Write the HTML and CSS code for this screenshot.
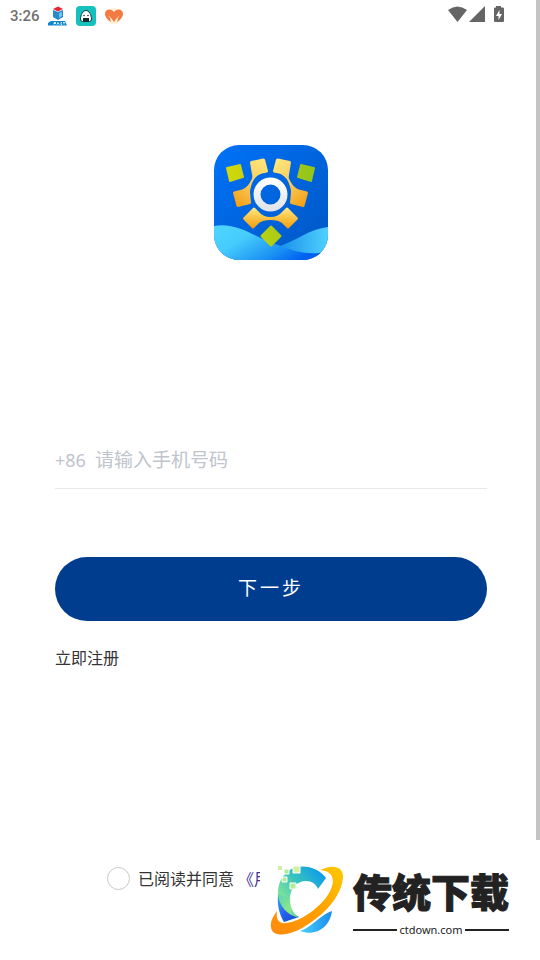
FILE: index.html
```html
<!DOCTYPE html>
<html lang="zh-CN">
<head>
<meta charset="utf-8">
<meta name="viewport" content="width=device-width, initial-scale=1">
<title>登录</title>
<link rel="stylesheet" href="styles.css">
</head>
<body>
<div class="screen">
  <header class="status">
    <span class="clock">3:26</span>
    <svg class="app-icon" viewBox="0 0 20 20" aria-hidden="true">
      <path fill="#2689cc" d="M5 4l5 2v8l-5-3zM15 4l-5 2v8l5-3z"/>
      <path fill="#74c6e8" d="M11 7l3-1v4l-3 2z"/>
      <path fill="#e32636" d="M5 3l5-2.500 5 2.500-5 2.500z"/>
      <path fill="#0d84cf" d="M3 15h14l2 4.500H0V17z"/>
      <path stroke="#fff" stroke-width=".8" fill="none" d="M6 18.500v-2h2m-2 1h2m1 1l1-2 1 2m3-2h-1v2h1m1-2h2m-1 0v2"/>
    </svg>
    <svg class="app-icon" viewBox="0 0 20 20" aria-hidden="true">
      <rect width="20" height="20" rx="4" fill="#14c1bc"/>
      <path d="M10 4.500C7 4.500 4.500 9 4.500 13q0 2.500 2 2.500h7q2 0 2-2.500c0-4-2.500-8.500-5.500-8.500z" fill="#fff" stroke="#16383d"/>
      <path fill="#14272c" d="M7 12h6v3.500H7z"/>
      <circle cx="8" cy="9.500" r=".7"/><circle cx="12" cy="9.500" r=".7"/>
    </svg>
    <svg class="app-icon" viewBox="0 0 20 20" aria-hidden="true">
      <circle cx="10" cy="10" r="8" fill="#fff0d7"/>
      <path fill="#f47a43" d="M10 6C7 2 1 3 1 8c0 3 2 5 6 8l-1-4-2-3 4 4 2 3 2-3 4-4-2 3-1 4c4-3 6-5 6-8 0-5-6-6-9-2z"/>
      <path fill="#f47a43" d="M5 6h10l-1 4-4 5-4-5z"/>
    </svg>
    <svg class="signals" viewBox="0 0 58 20" aria-hidden="true">
      <g fill="#656565">
        <path d="M0 4Q9.500-3 19 4L9.500 16z"/>
        <path d="M37 0v16H21z"/>
        <path d="M48 1.500V0h5v1.500h2q1 0 1 1V15q0 1-1 1h-8q-1 0-1-1V2.500q0-1 1-1z"/>
      </g>
      <path fill="#fff" d="M51.500 4L48 10h2.500v4L54 8h-2.500z"/>
    </svg>
  </header>

  <main class="login">
    <svg class="logo" viewBox="0 0 114 115" role="img" aria-label="应用标志">
      <defs>
        <linearGradient id="sky" x2="1" y2="1"><stop stop-color="#0072f8"/><stop offset="1" stop-color="#0056c2"/></linearGradient>
        <linearGradient id="gold" x2="0" y2="1"><stop stop-color="#ffeb82"/><stop offset="1" stop-color="#f39b08"/></linearGradient>
        <linearGradient id="goldLeft" x1=".8" y1="0" x2=".2" y2="1"><stop stop-color="#ffe57a"/><stop offset=".55" stop-color="#f8c95a"/><stop offset="1" stop-color="#f5a016"/></linearGradient>
        <linearGradient id="lime"><stop stop-color="#d3d80b"/><stop offset="1" stop-color="#91c41b"/></linearGradient>
        <linearGradient id="wave" x2="1" y2=".5"><stop stop-color="#4ed6ff"/><stop offset=".35" stop-color="#46ccfc"/><stop offset=".75" stop-color="#1a90f3"/><stop offset="1" stop-color="#0060f0"/></linearGradient>
        <linearGradient id="waveRight"><stop stop-color="#1a90ea"/><stop offset="1" stop-color="#4fd1ff"/></linearGradient>
        <linearGradient id="ring" x2="0" y2="1"><stop stop-color="#fff"/><stop offset="1" stop-color="#e3e4ed"/></linearGradient>
        <clipPath id="tile"><rect width="114" height="115" rx="25"/></clipPath>
      </defs>
      <g clip-path="url(#tile)">
        <path fill="url(#sky)" d="M0 0h114v115H0z"/>
        <path fill="url(#wave)" d="M0 81C24 77 40 92 61 99c14 5 32 9 53 9v7H0z"/>
        <path fill="url(#waveRight)" d="M66 101c18-6 29-17 48-19v24c-15 5-33 1-48-5z"/>
      </g>
      <g id="arm">
        <path fill="url(#goldLeft)" d="M37 16l12-2.500q1.500 0 2 1L54 26q0 1-1 1.500l-5 1c-6 2-9 6-11 13q-1 3-1 6l1 10q0 1-1 1.500L24 62q-1 0-1.500-1L19 48q0-1 1-1.500l8-2c5-2 7-5 9-9q2-3 1-6L36 17.500q0-1 1-1.500z"/>
      </g>
      <use href="#arm" transform="matrix(-1 0 0 1 113 0)"/>
      <path fill="url(#gold)" d="M39 63q1-1 2 0l4 4q4 5 11.500 5T68 67l4-4q1-1 2 0l10 10q0 1-1 2l-8 8q-1 1-2 0l-5-5q-4-3-11.500-3T45 78l-5 5q-1 1-2 0l-8-8q-1-1-1-2z"/>
      <g fill="url(#lime)">
        <path d="M13 22l13-3q1 0 1 1l3 12q0 1-1 1l-13 4q-1 0-1-1l-3-13q0-1 1-1zM100 22l-13-3q-1 0-1 1l-3 12q0 1 1 1l13 4q1 0 1-1l3-13q0-1-1-1zM56 81q1-1 2 0l9 9q1 1 0 2l-9 9q-1 1-2 0l-9-9q-1-1 0-2z"/>
      </g>
      <circle cx="56.500" cy="49.500" r="13.500" fill="none" stroke="url(#ring)" stroke-width="7"/>
    </svg>

    <form class="form">
      <div class="field">
        <label for="phone">+86</label>
        <input id="phone" type="tel" placeholder="请输入手机号码">
      </div>
      <button class="next" type="button">下一步</button>
      <a class="register" href="#">立即注册</a>
      <div class="consent">
        <input id="agree" type="radio">
        <label for="agree">已阅读并同意</label><a href="#">《用</a>
      </div>
    </form>
  </main>

  <div class="scrollbar"></div>

  <aside class="brand">
    <svg class="brand-mark" viewBox="0 0 74 72" aria-hidden="true">
      <defs>
        <linearGradient id="cyan" x1="0" y1=".8" x2="1" y2=".2"><stop stop-color="#80e59a"/><stop offset=".45" stop-color="#38c4bd"/><stop offset="1" stop-color="#0b98ec"/></linearGradient>
        <linearGradient id="leaf" x1="0" y1="0" x2="1" y2="1"><stop stop-color="#5fd2ad"/><stop offset=".6" stop-color="#8ae88b"/><stop offset="1" stop-color="#4fc9a8"/></linearGradient>
        <linearGradient id="deep" x2="1" y2="1"><stop stop-color="#38a9ed"/><stop offset=".5" stop-color="#2460ed"/><stop offset="1" stop-color="#1546c2"/></linearGradient>
        <linearGradient id="orbit" x1="0" y1="1" x2="1" y2="0"><stop stop-color="#ff8a0b"/><stop offset=".5" stop-color="#ff9e00"/><stop offset="1" stop-color="#ffc900"/></linearGradient>
        <linearGradient id="tail" x2="1"><stop stop-color="#4cd0ff"/><stop offset="1" stop-color="#198ceb"/></linearGradient>
      </defs>
      <path fill="url(#cyan)" d="M56 13C47 1 30-2 18 6 10 13 7 22 8 33l12 3c-1-12 7-20 16-20 6 0 10 3 12 8z"/>
      <path fill="url(#deep)" d="M8 30c-1 9 1 19 6 27l15-5C20 48 12 41 8 30z"/>
      <path fill="url(#leaf)" d="M8 29c1 12 9 21 21 24-6-5-9-11-9-19z"/>
      <path fill="url(#orbit)" d="M50 5C63-1 73 1 73 12c-1 17-15 34-33 46C22 71 2 74 1 62c-1-5 2-11 6-16-1 8 1 13 9 12 16-1 42-21 46-37 3-10-2-15-12-16z"/>
      <path fill="url(#tail)" d="M62 46c-2 16-16 26-32 20 12-4 20-16 32-20z"/>
      <g fill="#afed97" stroke="#fff">
        <path fill="#d4efa2" stroke="none" d="M8 1h4v4H8z"/><path fill="#d4efa2" d="M23 1h7v7h-7z"/>
        <path d="M14 4h5v5h-5zM12 12h5v5h-5zM20 18h6v6h-6z"/>
      </g>
    </svg>
    <div class="brand-name">
      <strong>传统下载</strong>
      <span>ctdown.com</span>
    </div>
  </aside>
</div>
</body>
</html>
```
FILE: styles.css
```css
* { box-sizing: border-box; }

body {
  margin: 0;
  background: #fff;
  color: #333;
  font-family: "Noto Sans CJK SC", sans-serif;
  font-size: 16px;
}

a { color: inherit; text-decoration: none; }

.screen {
  position: relative;
  display: flex;
  flex-direction: column;
  min-height: 100vh;
  overflow: hidden;
}

.status {
  display: flex;
  align-items: center;
  gap: 8px;
  height: 32px;
  padding: 0 34px 0 10px;
}

.clock {
  color: #707070;
  font: 500 15px/20px Roboto, sans-serif;
}

.app-icon { width: 20px; height: 20px; }
.signals { width: 58px; height: 20px; margin-left: auto; }

.login {
  flex: 1;
  display: flex;
  flex-direction: column;
  padding: 113px 53px 70px 55px;
}

.logo {
  flex: none;
  align-self: center;
  width: 114px;
  height: 115px;
}

.form {
  flex: 1;
  display: flex;
  flex-direction: column;
  margin-top: 172px;
}

.field {
  display: flex;
  align-items: baseline;
  gap: 9px;
  height: 57px;
  padding-top: 13px;
  border-bottom: 1px solid #e8e8e8;
  color: #c0c4cc;
  font-size: 19px;
  line-height: 28px;
}

.field label { font-family: "Noto Sans", sans-serif; font-size: 18px; }

.field input {
  flex: 1;
  min-width: 0;
  height: 28px;
  padding: 0;
  border: 0;
  outline: 0;
  background: none;
  color: #333;
  font: inherit;
}

.field input::placeholder { color: #c0c4cc; opacity: 1; }

.next {
  height: 64px;
  margin-top: 68px;
  padding: 0 0 4px;
  border: 0;
  border-radius: 32px;
  background: #003d8f;
  color: #fff;
  font: 400 19px/28px "Noto Sans CJK SC", sans-serif;
  letter-spacing: 3px;
}

.register {
  align-self: flex-start;
  margin-top: 24px;
  line-height: 24px;
}

.consent {
  display: flex;
  align-items: center;
  gap: 8px;
  margin-top: auto;
  padding-left: 52px;
  line-height: 24px;
  white-space: nowrap;
}

.consent input {
  appearance: none;
  width: 23px;
  height: 23px;
  margin: 0;
  border: 1px solid #c8c8c8;
  border-radius: 50%;
}

.consent label { margin-right: -4px; }
.consent a { color: #3d329e; }

.scrollbar {
  position: absolute;
  top: 0;
  right: 0;
  bottom: 120px;
  width: 4px;
  background: #c4c4c4;
}

.brand {
  position: absolute;
  right: 0;
  bottom: 0;
  display: flex;
  gap: 9px;
  width: 280px;
  height: 120px;
  padding: 25px 0 0 10px;
  background: #fff;
}

.brand-mark { width: 74px; height: 72px; }

.brand-name {
  display: flex;
  flex-direction: column;
  width: 156px;
  color: #222;
}

.brand-name strong {
  font-size: 39px;
  font-weight: 900;
  line-height: 50px;
  white-space: nowrap;
  -webkit-text-stroke: 1px #222;
}

.brand-name span {
  display: flex;
  align-items: center;
  gap: 2px;
  font-family: "Noto Sans", sans-serif;
  font-size: 11px;
  line-height: 30px;
}

.brand-name span::before,
.brand-name span::after {
  content: "";
  flex: 1;
  height: 2px;
  background: #222;
}
```
